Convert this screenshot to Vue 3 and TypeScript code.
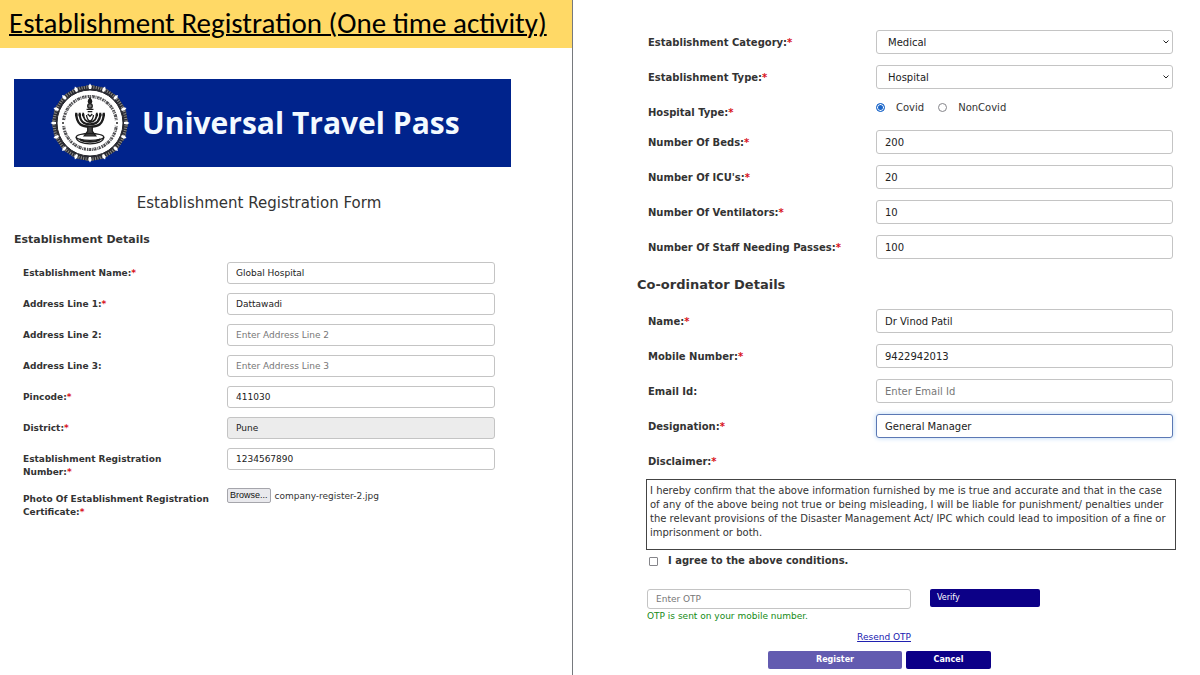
<script setup lang="ts">
import { onMounted, reactive, ref } from 'vue'

interface Field {
  id: string
  label: string
  required: boolean
  value: string
  placeholder?: string
  locked?: boolean
}

const address = reactive<Field[]>([
  { id: 'est-name', label: 'Establishment Name:', required: true, value: 'Global Hospital' },
  { id: 'addr-1', label: 'Address Line 1:', required: true, value: 'Dattawadi' },
  { id: 'addr-2', label: 'Address Line 2:', required: false, value: '', placeholder: 'Enter Address Line 2' },
  { id: 'addr-3', label: 'Address Line 3:', required: false, value: '', placeholder: 'Enter Address Line 3' },
  { id: 'pincode', label: 'Pincode:', required: true, value: '411030' },
  { id: 'district', label: 'District:', required: true, value: 'Pune', locked: true },
  { id: 'reg-no', label: 'Establishment Registration Number:', required: true, value: '1234567890' },
])

const counts = reactive<Field[]>([
  { id: 'beds', label: 'Number Of Beds:', required: true, value: '200' },
  { id: 'icus', label: "Number Of ICU's:", required: true, value: '20' },
  { id: 'ventilators', label: 'Number Of Ventilators:', required: true, value: '10' },
  { id: 'staff', label: 'Number Of Staff Needing Passes:', required: true, value: '100' },
])

const coordinator = reactive<Field[]>([
  { id: 'co-name', label: 'Name:', required: true, value: 'Dr Vinod Patil' },
  { id: 'mobile', label: 'Mobile Number:', required: true, value: '9422942013' },
  { id: 'email', label: 'Email Id:', required: false, value: '', placeholder: 'Enter Email Id' },
  { id: 'designation', label: 'Designation:', required: true, value: 'General Manager' },
])

const category = ref('Medical')
const kind = ref('Hospital')
const hospitalType = ref('Covid')
const agreed = ref(false)
const otp = ref('')
const fileName = ref('company-register-2.jpg')
const picker = ref<HTMLInputElement | null>(null)

function onPick(): void {
  const file = picker.value?.files?.[0]
  if (file) fileName.value = file.name
}

const petals = Array.from({ length: 16 }, (_, i) => i * 22.5)

onMounted(() => {
  const el = document.getElementById('designation') as HTMLInputElement | null
  el?.focus()
  el?.setSelectionRange(8, 8)
})
</script>

<template>
  <main class="page">
    <section class="left">
      <h1 class="title">Establishment Registration (One time activity)</h1>
      <div class="left-body">
        <header class="banner">
          <svg class="emblem" viewBox="-40 -40 80 80" aria-hidden="true">
            <circle r="35" fill="none" stroke="#2a2b33" stroke-width="5" />
            <circle r="36" fill="none" stroke="#8f8f8c" stroke-width="3" stroke-dasharray="1 1.4" />
            <circle r="37.5" fill="none" stroke="#55565c" stroke-width="1" stroke-dasharray="8 6.73" stroke-dashoffset="4" />
            <g v-for="a in petals" :key="a" :transform="`rotate(${a})`">
              <path d="M0 -39.5 L1.6 -37 L1 -34 L-1 -34 L-1.6 -37 Z" fill="#ffffff" />
            </g>
            <circle r="33" fill="#ffffff" stroke="#26262b" stroke-width="1" />
            <circle r="26.5" fill="none" stroke="#4d4d50" stroke-width="3" stroke-dasharray="2 0.6 1 0.8 3 0.6 1 0.7 2.4 0.5 1.6 1" />
            <circle r="26" fill="none" stroke="#ffffff" stroke-width="0.8" stroke-dasharray="1 1.7 0.8 2.4" />
            <circle cx="-27" cy="0" r="3" fill="#ffffff" />
            <circle cx="27" cy="0" r="3" fill="#ffffff" />
            <circle cx="-27" cy="0" r="1" fill="#222222" />
            <circle cx="27" cy="0" r="1" fill="#222222" />
            <g fill="none" stroke="#1d1d1d" stroke-width="1.1" transform="translate(0 -1) scale(1.15)">
              <path d="M0 -21 C-2 -18 -2 -17 0 -16 C2 -17 2 -18 0 -21 Z" fill="#1d1d1d" />
              <circle cx="0" cy="-14" r="2" fill="#777777" />
              <path d="M-3 -11 H3 M-2 -9 H2 M-2 -7 L0 -5 L2 -7" />
              <path d="M-12 -8 C-12 3 -6 4 0 4 C6 4 12 3 12 -8" stroke-width="2" />
              <path d="M-9 -8 C-9 0 -5 2 0 2 C5 2 9 0 9 -8" stroke-width="1.8" />
              <path d="M-6 -8 C-6 -2 -3 0 0 0 C3 0 6 -2 6 -8" stroke-width="1.6" />
              <path d="M-3 -6 C-3 -3 -1 -1 0 -1 C1 -1 3 -3 3 -6" />
              <path d="M-13 -6 H-11 M-10 -6 H-8 M-7 -6 H-5 M5 -6 H7 M8 -6 H10 M11 -6 H13" stroke-width="2" />
              <path d="M-2 4 V8 L-5 12 H5 L2 8 V4 Z" fill="#444444" />
              <ellipse cx="0" cy="13" rx="12" ry="3" />
              <path d="M-12 13 C-12 21 12 21 12 13" />
              <path d="M-9 15 C-5 18 5 18 9 15" stroke-width="1.5" />
            </g>
          </svg>
          <span class="banner-text">Universal Travel Pass</span>
        </header>

        <h2 class="form-title">Establishment Registration Form</h2>
        <h3 class="heading">Establishment Details</h3>

        <div class="rows">
          <div v-for="f in address" :key="f.id" class="row">
            <label :for="f.id">{{ f.label }}<span v-if="f.required" class="req">*</span></label>
            <input :id="f.id" v-model="f.value" class="box" type="text" :placeholder="f.placeholder" :disabled="f.locked" />
          </div>
          <div class="row">
            <label for="photo">Photo Of Establishment Registration Certificate:<span class="req">*</span></label>
            <div class="file">
              <input id="photo" ref="picker" type="file" hidden @change="onPick" />
              <button type="button" class="browse" @click="picker?.click()">Browse...</button>
              <span>{{ fileName }}</span>
            </div>
          </div>
        </div>
      </div>
    </section>

    <form class="right" @submit.prevent>
      <div class="rows">
        <div class="row">
          <label for="category">Establishment Category:<span class="req">*</span></label>
          <div class="select">
            <select id="category" v-model="category" class="box"><option>Medical</option></select>
            <svg class="chevron" viewBox="0 0 6 4" aria-hidden="true"><path d="M0.5 0.5 L3 3 L5.5 0.5" /></svg>
          </div>
        </div>
        <div class="row">
          <label for="kind">Establishment Type:<span class="req">*</span></label>
          <div class="select">
            <select id="kind" v-model="kind" class="box"><option>Hospital</option></select>
            <svg class="chevron" viewBox="0 0 6 4" aria-hidden="true"><path d="M0.5 0.5 L3 3 L5.5 0.5" /></svg>
          </div>
        </div>
        <div class="row" role="radiogroup" aria-labelledby="hospital-type">
          <span id="hospital-type" class="caption">Hospital Type:<span class="req">*</span></span>
          <div class="radios">
            <label class="radio"><input v-model="hospitalType" type="radio" name="hospital" value="Covid" />Covid</label>
            <label class="radio"><input v-model="hospitalType" type="radio" name="hospital" value="NonCovid" />NonCovid</label>
          </div>
        </div>
        <div v-for="f in counts" :key="f.id" class="row">
          <label :for="f.id">{{ f.label }}<span class="req">*</span></label>
          <input :id="f.id" v-model="f.value" class="box" type="text" />
        </div>
      </div>

      <h3 class="heading">Co-ordinator Details</h3>

      <div class="rows">
        <div v-for="f in coordinator" :key="f.id" class="row">
          <label :for="f.id">{{ f.label }}<span v-if="f.required" class="req">*</span></label>
          <input :id="f.id" v-model="f.value" class="box" type="text" :placeholder="f.placeholder" />
        </div>
        <div class="row">
          <span class="caption">Disclaimer:<span class="req">*</span></span>
        </div>
      </div>

      <p class="disclaimer">
        I hereby confirm that the above information furnished by me is true and accurate and that in the case of any of
        the above being not true or being misleading, I will be liable for punishment/ penalties under the relevant
        provisions of the Disaster Management Act/ IPC which could lead to imposition of a fine or imprisonment or both.
      </p>
      <label class="agree"><input v-model="agreed" type="checkbox" />I agree to the above conditions.</label>

      <div class="otp">
        <div class="otp-entry">
          <input v-model="otp" class="box" type="text" placeholder="Enter OTP" aria-label="Enter OTP" />
          <span class="sent">OTP is sent on your mobile number.</span>
          <a href="#" class="resend">Resend OTP</a>
        </div>
        <button type="button" class="btn verify">Verify</button>
      </div>

      <div class="actions">
        <button type="submit" class="btn register">Register</button>
        <button type="button" class="btn cancel">Cancel</button>
      </div>
    </form>
  </main>
</template>

<style>
body {
  margin: 0;
  background: #ffffff;
}
</style>

<style scoped>
.page {
  display: grid;
  grid-template-columns: minmax(0, 573fr) minmax(0, 627fr);
  min-height: 100vh;
  font-family: Verdana, "DejaVu Sans", sans-serif;
  color: #333333;
}
.page * {
  box-sizing: border-box;
}
.left {
  border-right: 1px solid #76797d;
  font-size: 9px;
}
.title {
  margin: 0;
  padding: 0 9px 2px;
  background: #ffd966;
  color: #000000;
  font: 400 29px/46px Calibri, Carlito, Lato, sans-serif;
  text-decoration: underline;
  text-decoration-thickness: 2px;
  white-space: nowrap;
}
.left-body {
  padding: 31px 61px 0 14px;
}
.banner {
  display: flex;
  align-items: center;
  gap: 12px;
  height: 88px;
  padding-left: 36px;
  background: #00238c;
}
.emblem {
  flex: none;
  width: 80px;
  height: 80px;
}
.banner-text {
  color: #f4faff;
  font: 700 30px/40px "Segoe UI", "Open Sans", sans-serif;
  white-space: nowrap;
}
.form-title {
  margin: 26px 16px 19px 9px;
  font-size: 15px;
  font-weight: 400;
  line-height: 20px;
  text-align: center;
}
.heading {
  margin: 0;
  line-height: 16px;
}
.left .heading {
  margin-bottom: 14px;
  font-size: 11px;
}
.rows {
  display: flex;
  flex-direction: column;
}
.left .rows {
  gap: 9px;
  margin: 0 16px 0 9px;
}
.row {
  display: grid;
  align-items: start;
}
.left .row {
  grid-template-columns: minmax(0, 204fr) minmax(0, 268fr);
}
.row > label,
.caption {
  padding-top: 5px;
  font-weight: 700;
  line-height: 13px;
}
.left .row > label {
  padding-right: 16px;
}
.right .row > label,
.caption {
  padding-top: 6px;
}
.req {
  color: #d8121c;
}
.box {
  width: 100%;
  height: 22px;
  margin: 0;
  padding: 0 8px;
  border: 1px solid #c4c4c4;
  border-radius: 3px;
  background: #ffffff;
  color: #222222;
  font: inherit;
  outline: none;
}
.box::placeholder {
  color: #777777;
  opacity: 1;
}
.box:disabled {
  background: #ececec;
}
.file {
  display: flex;
  align-items: center;
  gap: 4px;
}
.browse {
  height: 15px;
  padding: 0 2px;
  border: 1px solid #a5a5ab;
  border-radius: 2px;
  background: #e9e9ed;
  color: #111111;
  font: 400 9px/13px "Segoe UI", "Liberation Sans", sans-serif;
}
.right {
  padding: 30px 24px 6px 64px;
  font-size: 10px;
}
.right .rows {
  gap: 11px;
  margin: 0 3px 0 11px;
}
.right .row {
  grid-template-columns: minmax(0, 228fr) minmax(0, 297fr);
}
.right .rows .box {
  height: 24px;
}
.right .heading {
  margin: 18px 0 16px;
  font-size: 13px;
}
.select {
  position: relative;
}
.select select {
  display: block;
  padding: 1px 11px 0;
  appearance: none;
}
.chevron {
  position: absolute;
  top: 10px;
  right: 4px;
  width: 6px;
  height: 4px;
  fill: none;
  stroke: #222222;
  pointer-events: none;
}
.radios {
  display: flex;
  gap: 14px;
}
.radio {
  display: flex;
  align-items: center;
  gap: 11px;
  line-height: 15px;
}
.radio input,
.agree input {
  appearance: none;
  width: 9px;
  height: 9px;
  margin: 0;
  border: 1px solid #85858a;
  background: #ffffff;
}
.radio input {
  border-radius: 50%;
}
.radio input:checked {
  border-color: #1b66c9;
  background: #1b66c9;
  box-shadow: inset 0 0 0 1px #ffffff;
}
.agree input {
  border-radius: 1px;
}
.agree input:checked {
  background: #1b66c9;
}
#designation {
  border-color: #5b78b4;
  box-shadow: 0 0 5px #b5d5f5;
}
.disclaimer {
  margin: 11px 0 0 9px;
  padding: 4px 3px 9px;
  border: 1px solid #444444;
  line-height: 14px;
}
.agree {
  display: flex;
  align-items: center;
  gap: 10px;
  margin: 4px 0 0 12px;
  font-weight: 700;
  line-height: 14px;
}
.otp {
  display: grid;
  grid-template-columns: minmax(0, 264fr) minmax(0, 110fr) minmax(0, 117fr);
  column-gap: 19px;
  align-items: start;
  margin: 21px 0 0 10px;
  font-size: 9px;
}
.otp-entry {
  display: flex;
  flex-direction: column;
}
.otp .box {
  height: 20px;
}
.sent {
  color: #158a15;
  line-height: 14px;
}
.resend {
  align-self: flex-end;
  margin-top: 8px;
  color: #2020b0;
  line-height: 12px;
}
.btn {
  height: 18px;
  padding: 0 7px;
  border: 0;
  border-radius: 2px;
  background: #0c0087;
  color: #ffffff;
  font: 700 8px/18px Verdana, "DejaVu Sans", sans-serif;
}
.verify {
  font-weight: 400;
  text-align: left;
}
.actions {
  display: flex;
  justify-content: center;
  gap: 4px;
  margin-top: 8px;
  padding-right: 54px;
}
.register {
  width: 134px;
  background: #635bb0;
}
.cancel {
  width: 85px;
}
</style>
